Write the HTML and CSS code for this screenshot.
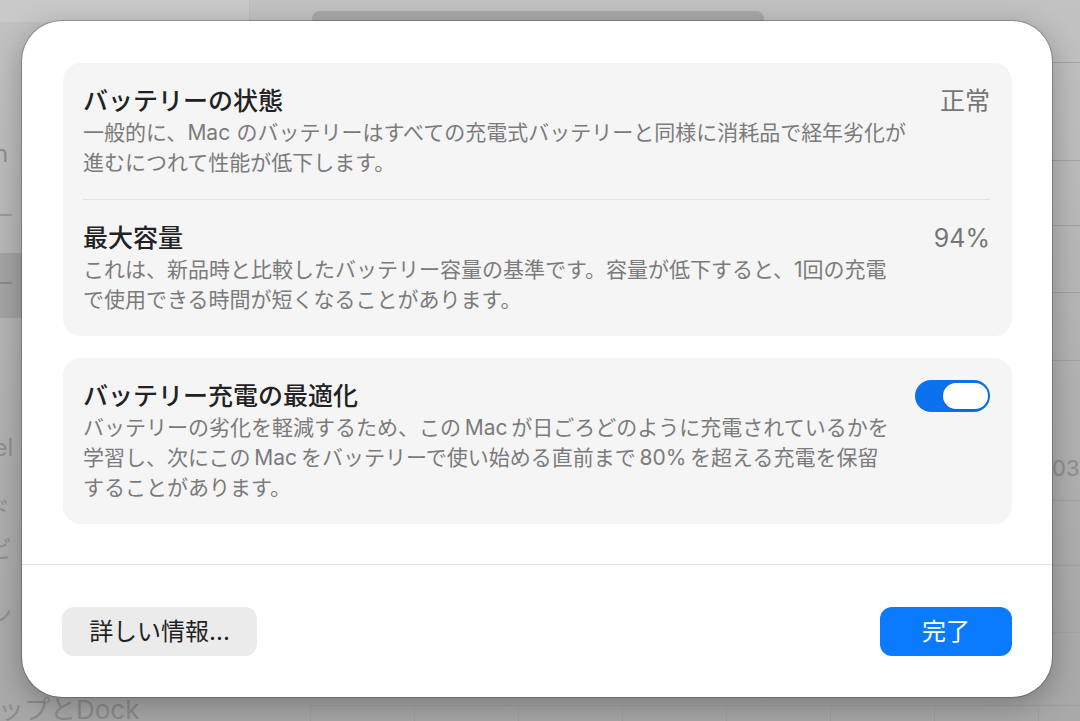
FILE: index.html
```html
<!DOCTYPE html>
<html lang="ja">
<head>
<meta charset="utf-8">
<title>バッテリーの状態</title>
<link rel="stylesheet" href="styles.css">
</head>
<body>
<div class="backdrop">
  <div class="bd-topbar"></div>
  <div class="bd-search"></div>
  <div class="bd-sidebar-sel"></div>
  <span class="bd-text bd-n">n</span>
  <span class="bd-text bd-dash1">ー</span>
  <span class="bd-text bd-dash2">ー</span>
  <span class="bd-text bd-tel">tel</span>
  <span class="bd-text bd-ni">ド</span>
  <span class="bd-text bd-bi">ビ</span>
  <span class="bd-text bd-n2">ン</span>
  <span class="bd-text bd-dock">ップとDock</span>
  <span class="bd-text bd-03">03</span>
  <div class="bd-line" style="top:62px"></div>
  <div class="bd-line" style="top:160px"></div>
  <div class="bd-line" style="top:225px"></div>
  <div class="bd-line" style="top:292px"></div>
  <div class="bd-line" style="top:360px"></div>
  <div class="bd-line" style="top:500px"></div>
  <div class="bd-line" style="top:565px"></div>
  <div class="bd-line" style="top:632px"></div>
  <div class="bd-bottomgrid"></div>
</div>

<div class="dialog">
  <div class="dialog-body">
    <section class="card">
      <div class="row">
        <div class="row-text">
          <h2 class="row-title">バッテリーの状態</h2>
          <p class="row-desc">一般的に、<span class="lat-r">Mac</span>のバッテリーはすべての充電式バッテリーと同様に消耗品で経年劣化が<br>進むにつれて性能が低下します。</p>
        </div>
        <div class="row-value">正常</div>
      </div>
      <div class="divider"></div>
      <div class="row">
        <div class="row-text">
          <h2 class="row-title">最大容量</h2>
          <p class="row-desc">これは、新品時と比較したバッテリー容量の基準です。容量が低下すると、1回の充電<br>で使用できる時間が短くなることがあります。</p>
        </div>
        <div class="row-value">94%</div>
      </div>
    </section>

    <section class="card">
      <div class="row">
        <div class="row-text">
          <h2 class="row-title">バッテリー充電の最適化</h2>
          <p class="row-desc">バッテリーの劣化を軽減するため、この<span class="lat">Mac</span>が日ごろどのように充電されているかを<br>学習し、次にこの<span class="lat">Mac</span>をバッテリーで使い始める直前まで<span class="lat">80%</span>を超える充電を保留<br>することがあります。</p>
        </div>
        <div class="toggle on"><span class="knob"></span></div>
      </div>
    </section>
  </div>

  <div class="dialog-footer">
    <button class="btn btn-secondary">詳しい情報...</button>
    <button class="btn btn-primary">完了</button>
  </div>
</div>
</body>
</html>
```

FILE: styles.css
```css
* { box-sizing: border-box; }

html, body {
  margin: 0;
  padding: 0;
}

body {
  width: 1080px;
  height: 721px;
  overflow: hidden;
  position: relative;
  font-family: Inter, "Noto Sans CJK JP", sans-serif;
  background: linear-gradient(180deg, #c2c2c2 0%, #b3b3b3 50%, #a8a8a8 100%);
}

/* ---------- dimmed window behind the sheet ---------- */
.backdrop {
  position: absolute;
  inset: 0;
}

.bd-topbar {
  position: absolute;
  left: 0;
  top: 0;
  width: 250px;
  height: 22px;
  background: #c9c9c9;
  border-right: 1px solid #bdbdbd;
}

.bd-search {
  position: absolute;
  left: 312px;
  top: 11px;
  width: 452px;
  height: 16px;
  border-radius: 8px;
  background: #a9a9a9;
}

.bd-sidebar-sel {
  position: absolute;
  left: 0;
  top: 253px;
  width: 22px;
  height: 65px;
  background: #a4a4a4;
}

.bd-text {
  position: absolute;
  color: #8f8f8f;
  font-size: 24px;
  line-height: 1;
  white-space: nowrap;
}

.bd-n { left: -6px; top: 142px; }
.bd-dash1 { left: -10px; top: 204px; color: #9a9a9a; }
.bd-dash2 { left: -10px; top: 272px; color: #8a8a8a; }
.bd-tel { left: -14px; top: 436px; }
.bd-ni { left: -14px; top: 498px; }
.bd-bi { left: -12px; top: 538px; }
.bd-n2 { left: -12px; top: 603px; }
.bd-dock { left: -2px; top: 697px; font-size: 26px; color: #8c8c8c; }
.bd-03 { left: 1052px; top: 457px; font-size: 22px; color: #8d8d8d; }

.bd-line {
  position: absolute;
  left: 1052px;
  right: 0;
  height: 1px;
  background: #a3a3a3;
}

.bd-bottomgrid {
  position: absolute;
  left: 310px;
  right: 0;
  top: 705px;
  height: 16px;
  border-top: 1px solid #9e9e9e;
  background-image: repeating-linear-gradient(90deg, #a0a0a0 0 1px, transparent 1px 104px);
}

/* ---------- sheet ---------- */
.dialog {
  position: absolute;
  left: 22px;
  top: 21px;
  width: 1030px;
  height: 676px;
  background: #ffffff;
  border-radius: 40px;
  box-shadow: 0 0 0 1px rgba(0, 0, 0, 0.22), 0 8px 30px rgba(0, 0, 0, 0.28);
  display: flex;
  flex-direction: column;
  overflow: hidden;
}

.dialog-body {
  padding: 42px 40px 0 41px;
  display: flex;
  flex-direction: column;
  gap: 22px;
  height: 544px;
  border-bottom: 1px solid #e2e2e2;
}

.card {
  background: #f5f5f5;
  border-radius: 18px;
}

.row {
  display: flex;
  align-items: flex-start;
  gap: 20px;
  padding: 21px 22px 21px 20px;
}

.row-text {
  flex: 1;
  min-width: 0;
}

.row-title {
  margin: 0;
  font-size: 25px;
  line-height: 34px;
  font-weight: 500;
  color: #222222;
}

.row-desc {
  margin: 0;
  font-size: 21px;
  line-height: 30px;
  font-weight: 400;
  color: #7b7b7b;
  white-space: nowrap;
}

.lat {
  margin: 0 0.18em;
}

.lat-r {
  margin-right: 0.3em;
}

.row-value {
  font-size: 25px;
  line-height: 34px;
  color: #767676;
  white-space: nowrap;
}

.divider {
  height: 1px;
  margin: 0 22px 0 20px;
  background: #e2e2e2;
}

.toggle {
  position: relative;
  flex: none;
  width: 75px;
  height: 32px;
  margin-top: 1px;
  border-radius: 16px;
  background: #0b71ee;
}

.toggle .knob {
  position: absolute;
  right: 2px;
  top: 3px;
  width: 45px;
  height: 26px;
  border-radius: 13px;
  background: #ffffff;
  box-shadow: 0 1px 2px rgba(0, 0, 0, 0.15);
}

.dialog-footer {
  flex: 1;
  display: flex;
  justify-content: space-between;
  align-items: flex-start;
  padding: 42px 40px 0 40px;
}

.btn {
  height: 49px;
  border: none;
  border-radius: 12px;
  font-family: Inter, "Noto Sans CJK JP", sans-serif;
  font-size: 24px;
  line-height: 49px;
  padding: 0;
  cursor: default;
}

.btn-secondary {
  width: 195px;
  background: #ebebeb;
  color: #1f1f1f;
}

.btn-primary {
  width: 132px;
  background: #0a7aff;
  color: #ffffff;
}
```
